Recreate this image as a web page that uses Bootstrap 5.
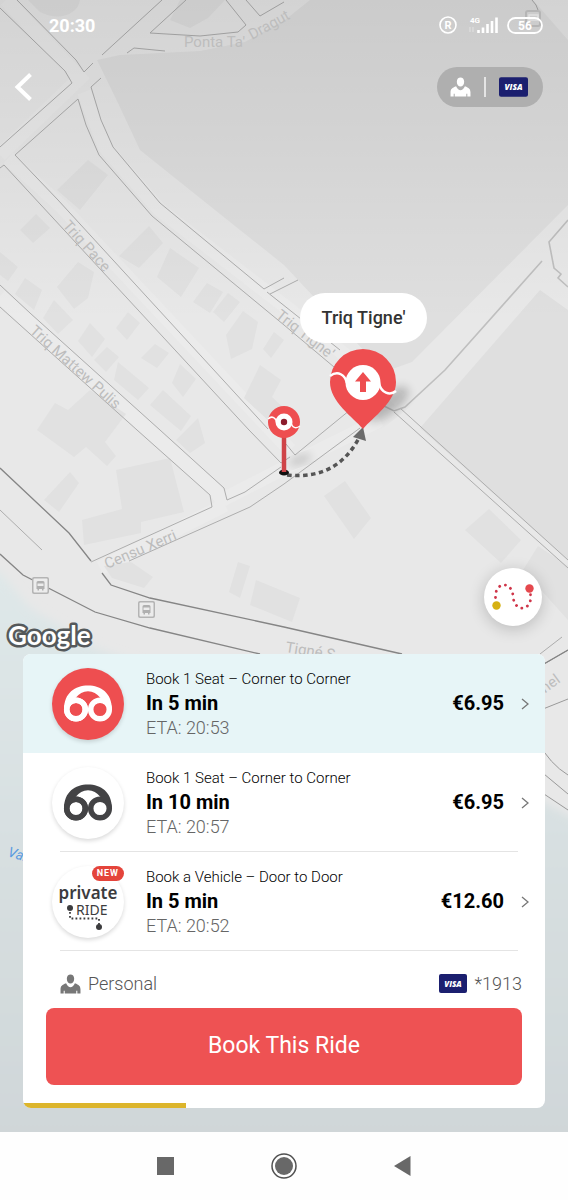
<!DOCTYPE html>
<html lang="en">
<head>
<meta charset="utf-8">
<meta name="viewport" content="width=device-width, initial-scale=1">
<title>Book a ride</title>
<link href="https://cdn.jsdelivr.net/npm/bootstrap@5.3.0/dist/css/bootstrap.min.css" rel="stylesheet">
<style>
  body { font-family: Roboto, "Liberation Sans", sans-serif; background: #fefefe; color: #000; }
  svg { display: block; flex-shrink: 0; }
  .stage { background: #e8e8e8; }
  .map { z-index: 0; }
  .map text { font-family: Roboto, sans-serif; fill: #bdbdbd; font-size: 15px; }
  .map .sea-name { fill: #5b9be0; font-size: 14px; font-style: italic; }
  .map .callout-text { fill: #333; font-size: 18px; font-weight: 500; }
  .layer { z-index: 1; }
  .status { height: 50px; padding: 0 25px 0 49px; font-size: 18px; font-weight: 700; }
  .status-icons { gap: 8px; }
  .topbar { height: 40px; margin-top: 17px; padding: 0 25px 0 14px; }
  .pill { width: 106px; height: 40px; padding: 0 15px 0 13px; background: #afafaf; }
  .pill-rule { width: 2px; height: 20px; background: #e4e4e4; }
  .float-row { padding: 0 26px 0 5px; }
  .google { overflow: visible; }
  .google text { font-family: Lato, sans-serif; font-size: 26px; font-weight: 700; fill: #fff; stroke: #55595b; stroke-width: 5px; stroke-linejoin: round; paint-order: stroke; }
  .route-btn { width: 58px; height: 58px; margin-bottom: 28px; background: #fff; box-shadow: 0 3px 16px rgba(0,0,0,.2); }
  .sheet { margin: 0 23px 24px; border-radius: 8px; background: #fff; }
  .ride { height: 99px; padding: 0 16px 0 29px; gap: 22px; background: #fff; color: #000; }
  .ride.selected { background: #e7f5f7; }
  .ride-icon { width: 72px; height: 72px; background: #fff; color: #434345; box-shadow: 0 2px 4px rgba(0,0,0,.15); }
  .selected .ride-icon { background: #ee4e50; color: #fff; }
  .ride-name { font-size: 15px; line-height: 22px; font-weight: 300; }
  .ride-time { font-size: 20px; line-height: 26px; font-weight: 700; }
  .ride-eta { font-size: 18px; line-height: 24px; font-weight: 300; color: #666; }
  .ride-price { font-size: 20px; font-weight: 700; }
  .chev { margin-left: -5px; }
  .rule { height: 1px; margin: 0 27px 0 37px; background: #e4e4e4; }
  .rule-wrap { margin-top: -1px; position: relative; z-index: 2; }
  .new-badge { top: 0; right: 0; padding: 3px 5px; border-radius: 8px; background: #e4443b; font-size: 9px; line-height: 9px; font-weight: 700; letter-spacing: 1px; }
  .private text { font-family: "Noto Sans", sans-serif; fill: #3c3c3e; }
  .private .word-top { font-size: 17px; font-weight: 600; }
  .private .word-low { font-size: 14px; }
  .pay { height: 57px; padding: 8px 23px 0 37px; font-size: 18px; }
  .pay a { gap: 7px; color: #555; font-weight: 300; }
  .pay .person { color: #777; }
  .book { height: 77px; margin: 0 23px; border-radius: 8px; background: #ee5253; color: #fff; font-size: 23px; font-weight: 400; }
  .book:hover { background: #e24749; color: #fff; }
  .timer { height: 5px; margin-top: 18px; background: transparent; border-radius: 0 0 8px 8px; }
  .timer .progress-bar { background: #dcb52c; }
  .sysnav { height: 68px; padding: 0 147px; background: #fefefe; }
  .sysnav .btn { width: 38px; height: 38px; }
</style>
</head>
<body class="d-flex flex-column min-vh-100">
<svg width="0" height="0" class="position-absolute" aria-hidden="true">
  <defs>
    <symbol id="person" viewBox="0 0 20 19">
      <path d="M6.500 4.500C6.500 2 8 .5 10 .5S13.500 2 13.500 4.500C13.500 7.500 12 9 10 9S6.500 7.500 6.500 4.500ZM.5 18.500V14.500C.5 11.500 2 10.300 5.800 8.800C7 11.500 8.500 12.500 10 12.500S13 11.500 14.200 8.800C18 10.300 19.500 11.500 19.500 14.500V18.500H16.500V16H15.500V18.500H4.500V16H3.500V18.500Z" fill="currentColor"/>
    </symbol>
    <symbol id="visa" viewBox="0 0 28 19">
      <rect width="28" height="19" rx="2" fill="#1b1f6f"/>
      <text x="14" y="12.500" text-anchor="middle" font-family="Open Sans, sans-serif" font-size="8" font-weight="800" font-style="italic" fill="#fff">VISA</text>
    </symbol>
    <symbol id="wheels" viewBox="0 0 50 38">
      <g fill="none" stroke="currentColor" stroke-width="5.500">
        <circle cx="13" cy="24.500" r="9.300"/><circle cx="37" cy="24.500" r="9.300"/>
      </g>
      <path d="M1 24.500C1 8 12 .5 25 .5S49 8 49 24.500L37 12.600C34 8.500 30 6.200 25 6.200S16 8.500 13 12.600Z" fill="currentColor"/>
      <circle cx="13" cy="24.500" r="9.300" fill="none" stroke="currentColor" stroke-width="5.500"/>
    </symbol>
    <symbol id="chev-mark" viewBox="0 0 8 12"><path d="M1 1L7 6L1 11" fill="none" stroke="#777" stroke-width="1.300"/></symbol>
    <symbol id="bus" viewBox="0 0 17 17">
      <rect width="17" height="17" rx="2" fill="#b4b4b4"/><rect x="1.500" y="1.500" width="14" height="14" rx="1" fill="#ececec"/>
      <path d="M4.500 12V5.500Q4.500 4 6 4H11Q12.500 4 12.500 5.500V12H11.500V13.500H10V12H7V13.500H5.500V12Z" fill="#b0b0b0"/>
      <path d="M5.500 6.500H11.500V9H5.500Z" fill="#ececec"/>
    </symbol>
  </defs>
</svg>

<main class="stage position-relative flex-fill d-flex flex-column overflow-hidden">
  <svg class="map position-absolute top-0 start-0 w-100 h-100" viewBox="0 0 568 1132" preserveAspectRatio="xMidYMin slice" role="img" aria-label="Map">
    <defs>
      <linearGradient id="shade" x1="0" y1="0" x2="0" y2="1"><stop offset="0" stop-opacity=".09"/><stop offset=".35" stop-opacity=".06"/><stop offset="1" stop-opacity="0"/></linearGradient>
      <linearGradient id="sea" x1="0" y1="0" x2="0" y2="1"><stop offset="0" stop-color="#dfe8e9"/><stop offset="1" stop-color="#cfd6d8"/></linearGradient>
      <filter id="soft" x="-30%" y="-30%" width="160%" height="160%"><feGaussianBlur stdDeviation="5"/></filter>
    </defs>
    <rect width="568" height="1132" fill="#e8e8e8"/>
    <!-- water -->
    <path d="M-20 565L0 572L30 608L100 650L300 720L480 770L568 815L600 830V1150H-20Z" fill="url(#sea)" filter="url(#soft)"/>
    <!-- road surfaces -->
    <g fill="none" stroke="#ebebeb" stroke-width="14">
      <path d="M6 0L80 78L0 155M84 92L105 147L160 210L290 310L400 400M8 158L60 205L290 450M0 296L215 490L222 500L290 465L380 420M100 568L225 505"/>
    </g>
    <!-- large blocks -->
    <g fill="#dfdfdf">
      <path d="M97 60L120 55L200 51L245 42L285 20L310 0H533L568 40V205L412 362L384 372L284 265L225 218L140 150L118 103Z"/>
      <path d="M540 290L568 310V560L420 428Z"/>
    </g>
    <path d="M85 0L80 0C78 14 60 22 40 12L28 0Z M180 0H225L208 18L190 28L170 20Z" fill="#e0e0e0"/>
    <!-- buildings -->
    <g fill="#e1e1e1">
      <path d="M88 160L108 175L80 210L57 190ZM36 214L50 228L33 243L20 230ZM78 262L94 272L88 298L74 309L57 287ZM25 278L42 290L34 310L15 294ZM54 300L73 320L58 334L43 318ZM0 252L18 267L8 281L0 275ZM149 226L163 243L139 268L119 256ZM170 248L199 268L181 297L157 277ZM207 283L223 292L210 313L193 302ZM228 293L240 302L224 322L213 312ZM243 311L258 322L252 349L231 359L226 335ZM274 332L284 340L271 358L263 349ZM128 312L140 323L127 340L116 328ZM90 323L105 339L92 357L78 341ZM107 347L119 357L106 372L94 360ZM155 344L169 353L157 368L141 358ZM180 364L196 379L183 397L172 383ZM118 362L149 388L138 400L114 380ZM163 390L191 416L181 431L150 405ZM90 390L126 414L105 442L116 456L107 466L86 447L74 457L37 430L55 403L68 410ZM70 472L79 483L59 512L44 500ZM260 365L281 380L272 397L288 412L272 424L244 398ZM198 418L205 443L190 453L176 440ZM345 481L371 518L354 539L324 496ZM116 470L170 458L184 512L141 522V533L84 545L82 520L122 509ZM104 566L131 562L153 577L144 588L112 578ZM238 562L250 566L240 598L229 592ZM256 580L300 598L292 622L250 605ZM489 509L521 540L501 563L465 530ZM538 546L568 566V620L523 570Z"/>
    </g>
    <!-- kerb lines -->
    <g fill="none" stroke="#adadad" stroke-width="1">
      <path d="M0 8L65 71L72 83L0 147M17 0L76 60L84 72L93 63M102 55L162 0M127 53L134 48L165 51M186 0L150 33L200 36L238 32L246 25L226 0M246 0L260 16L284 2"/>
      <path d="M101 78L91 87L101 120L113 147L160 203L264 289L284 278M78 99L15 155L58 200L268 429M78 99L86 125L99 155L152 216L284 325L334 367M0 168L4 165L249 430L281 463L290 457M267 292L340 350M270 294L298 280M286 444L295 455L350 410M360 428L284 484L250 507L129 561"/>
      <path d="M0 285L30 313L160 430L224 488L227 500L245 492L281 467M0 307L137 430L210 495L212 507L91 562M0 510L42 550"/>
      <path d="M394 412L568 568M400 408L568 560M540 654L562 637"/>
      <path d="M539 667L568 650M538 711L568 699M538 742Q550 764 568 775M538 769L568 794M538 790L568 810" stroke="#999"/>
    </g>
    <g fill="none" stroke="#858585" stroke-width="1.300">
      <path d="M0 468L69 533L91 561M0 554L23 575L95 612L150 628L260 654M102 573L111 585L150 598L284 627L402 654M542 665L568 650"/>
    </g>
    <path d="M568 220L549 242L554 268L561 274L558 278L568 287M542 261L445 370L405 407L394 411L382 405" fill="none" stroke="#bfbfbf" stroke-width="1.600"/>
    <rect width="568" height="320" fill="url(#shade)"/>
    <path d="M532 0Q537 5 538 10" fill="none" stroke="#999"/>
    <!-- street names -->
    <text x="184" y="47">Ponta Ta'</text>
    <text transform="translate(252 40) rotate(-29)">Dragut</text>
    <text transform="translate(62 226) rotate(48)">Triq Pace</text>
    <text transform="translate(29 332) rotate(42)">Triq Mattew Pulis</text>
    <text transform="translate(275 317) rotate(38)">Triq Tigne'</text>
    <text transform="translate(107 569) rotate(-23)">Censu Xerri</text>
    <text transform="translate(285 652) rotate(9)">Tigné S</text>
    <text transform="translate(525 708) rotate(-36)">Tunnel</text>
    <text class="sea-name" transform="translate(7 856) rotate(17)">Valletta</text>
    <use href="#bus" x="32" y="577" width="17" height="17"/>
    <use href="#bus" x="138" y="601" width="17" height="17"/>
    <!-- pins and walking route -->
    <ellipse cx="388" cy="404" rx="25" ry="10" transform="rotate(-38 388 404)" opacity=".22" filter="url(#soft)"/>
    <ellipse cx="300" cy="460" rx="12" ry="4" transform="rotate(-20 300 460)" opacity=".18" filter="url(#soft)"/>
    <path d="M287 475C325 479 346 462 359 438" fill="none" stroke="#555" stroke-width="3.500" stroke-dasharray="4.500 3.500"/>
    <path d="M363 427L353 437L366 441Z" fill="#6b6b6b"/>
    <ellipse cx="284" cy="472.500" rx="5" ry="3" fill="#111"/>
    <path d="M284 436V472" stroke="#cf4448" stroke-width="4.500"/>
    <circle cx="284" cy="422" r="16" fill="#ee4e50"/>
    <path d="M268 419C272 415 276 418 277 423M291 422C292 428 296 429 300 426" fill="none" stroke="#fff" stroke-width="1.500"/>
    <circle cx="284" cy="422" r="8.500" fill="#fff"/><circle cx="284" cy="422" r="3.200" fill="#8c1c2c"/>
    <path d="M363 429C353 417 330 402 330 382A33 33 0 0 1 396 382C396 402 373 417 363 429Z" fill="#ee4e50"/>
    <path d="M330 376C338 370 345 375 347 383M379 383C381 393 390 396 396 391" fill="none" stroke="#fff" stroke-width="2.500"/>
    <circle cx="363" cy="382.500" r="17.500" fill="#fff"/>
    <path d="M363 372L371 381.500H366V392H360V381.500H355Z" fill="#ee4e50"/>
    <rect x="300" y="293" width="127" height="50" rx="25" fill="#fff"/>
    <text class="callout-text" x="363.500" y="324" text-anchor="middle">Triq Tigne'</text>
  </svg>

  <header class="layer position-relative text-white">
    <div class="status d-flex align-items-center justify-content-between">
      <span>20:30</span>
      <div class="status-icons d-flex align-items-center">
        <svg width="18" height="18" viewBox="0 0 18 18"><circle cx="9" cy="9" r="8" fill="none" stroke="#fff" stroke-width="1.600"/><text x="9" y="13" text-anchor="middle" font-size="11" font-weight="700" fill="#fff">R</text></svg>
        <svg width="34" height="20" viewBox="0 0 34 20"><text x="5" y="8" font-size="8" font-weight="700" fill="#fff">4G</text><path d="M13.500 18V15M18 18V12.500M22.500 18V9M27 18V6M31.500 18V2.500" stroke="#fff" stroke-width="2.600"/><path d="M5 12V17M8 12V17" stroke="#e2e2e2"/></svg>
        <svg width="36" height="32" viewBox="0 0 36 32"><rect x="19" y="2" width="14" height="15" rx="2" fill="none" stroke="#b5b5b5" stroke-width="2"/><path d="M22 6H31V11H22Z" fill="none" stroke="#e0e0e0" stroke-width="1.500"/><rect x="1" y="9" width="34" height="15" rx="7.500" fill="none" stroke="#fff" stroke-width="1.800"/><text x="18" y="21" text-anchor="middle" font-size="12" font-weight="700" fill="#fff">56</text></svg>
      </div>
    </div>
    <div class="topbar d-flex align-items-center justify-content-between">
      <button type="button" class="btn p-0 border-0" aria-label="Back"><svg width="20" height="30" viewBox="0 0 20 30"><path d="M16.500 2.500L3.500 15L16.500 27.500" fill="none" stroke="#fff" stroke-width="4"/></svg></button>
      <button type="button" class="pill btn border-0 rounded-pill text-white d-flex align-items-center justify-content-between" aria-label="Profile and payment">
        <svg width="21" height="20"><use href="#person"/></svg>
        <span class="pill-rule"></span>
        <svg width="29" height="20"><use href="#visa"/></svg>
      </button>
    </div>
  </header>

  <div class="layer position-relative mt-auto">
    <div class="float-row d-flex align-items-end justify-content-between">
      <svg class="google" width="94" height="36" viewBox="0 0 94 36"><text x="3" y="27">Google</text></svg>
      <button type="button" class="route-btn btn p-0 border-0 rounded-circle d-flex align-items-center justify-content-center" aria-label="Show route">
        <svg width="44" height="32" viewBox="0 0 44 32"><path d="M4.500 16.500C4 0 21 0 22 15S37 31 39.500 19V10" fill="none" stroke="#cf3549" stroke-width="2.800" stroke-linecap="round" stroke-dasharray=".1 6"/><circle cx="5.500" cy="24.500" r="4.200" fill="#d6b112"/><circle cx="38.500" cy="7.500" r="4.200" fill="#e5484d"/></svg>
      </button>
    </div>

    <section class="sheet overflow-hidden" aria-label="Ride options">
      <button type="button" class="ride selected btn w-100 border-0 rounded-0 text-start d-flex align-items-center">
        <span class="ride-icon rounded-circle d-flex align-items-center justify-content-center flex-shrink-0"><svg width="50" height="38"><use href="#wheels"/></svg></span>
        <span class="flex-fill"><span class="ride-name d-block">Book 1 Seat – Corner to Corner</span><span class="d-flex justify-content-between align-items-center ride-time"><span>In 5 min</span><span class="ride-price">€6.95</span></span><span class="ride-eta d-block">ETA: 20:53</span></span>
        <svg class="chev" width="8" height="12"><use href="#chev-mark"/></svg>
      </button>
      <button type="button" class="ride btn w-100 border-0 rounded-0 text-start d-flex align-items-center">
        <span class="ride-icon rounded-circle d-flex align-items-center justify-content-center flex-shrink-0"><svg width="50" height="38"><use href="#wheels"/></svg></span>
        <span class="flex-fill"><span class="ride-name d-block">Book 1 Seat – Corner to Corner</span><span class="d-flex justify-content-between align-items-center ride-time"><span>In 10 min</span><span class="ride-price">€6.95</span></span><span class="ride-eta d-block">ETA: 20:57</span></span>
        <svg class="chev" width="8" height="12"><use href="#chev-mark"/></svg>
      </button>
      <div class="rule-wrap"><div class="rule"></div></div>
      <button type="button" class="ride btn w-100 border-0 rounded-0 text-start d-flex align-items-center">
        <span class="ride-icon rounded-circle position-relative flex-shrink-0">
          <svg class="private" width="72" height="72" viewBox="0 0 72 72"><text class="word-top" x="36" y="33" text-anchor="middle">private</text><text class="word-low" x="24" y="49">RIDE</text><circle cx="18" cy="42" r="3" fill="#3c3c3e"/><circle cx="47" cy="61" r="3" fill="#3c3c3e"/><path d="M18 42V52.500H47V61" fill="none" stroke="#3c3c3e" stroke-width="1.800" stroke-dasharray="1.800 2.200"/></svg>
          <span class="new-badge position-absolute text-white">NEW</span>
        </span>
        <span class="flex-fill"><span class="ride-name d-block">Book a Vehicle – Door to Door</span><span class="d-flex justify-content-between align-items-center ride-time"><span>In 5 min</span><span class="ride-price">€12.60</span></span><span class="ride-eta d-block">ETA: 20:52</span></span>
        <svg class="chev" width="8" height="12"><use href="#chev-mark"/></svg>
      </button>
      <div class="rule-wrap"><div class="rule"></div></div>
      <div class="pay d-flex align-items-center justify-content-between">
        <a href="#" class="d-flex align-items-center text-decoration-none"><svg class="person" width="21" height="20"><use href="#person"/></svg>Personal</a>
        <a href="#" class="d-flex align-items-center text-decoration-none"><svg width="28" height="19"><use href="#visa"/></svg>*1913</a>
      </div>
      <div class="d-grid"><button type="button" class="book btn border-0">Book This Ride</button></div>
      <div class="timer progress" role="progressbar" aria-label="Offer time left" aria-valuenow="31" aria-valuemin="0" aria-valuemax="100"><div class="progress-bar" style="width:31.200%"></div></div>
    </section>
  </div>
</main>

<nav class="sysnav d-flex align-items-center justify-content-between" aria-label="System">
  <button type="button" class="btn p-0 border-0 d-flex align-items-center justify-content-center" aria-label="Recents"><svg width="18" height="18"><rect width="17" height="18" fill="#686868"/></svg></button>
  <button type="button" class="btn p-0 border-0 d-flex align-items-center justify-content-center" aria-label="Home"><svg width="28" height="28"><circle cx="14" cy="14" r="12" fill="none" stroke="#505050" stroke-width="1.500"/><circle cx="14" cy="14" r="9" fill="#686868"/></svg></button>
  <button type="button" class="btn p-0 border-0 d-flex align-items-center justify-content-center" aria-label="Back"><svg width="17" height="20"><path d="M0 10L16.500 0V20Z" fill="#686868"/></svg></button>
</nav>
<script src="https://cdn.jsdelivr.net/npm/bootstrap@5.3.0/dist/js/bootstrap.bundle.min.js"></script>
</body>
</html>
